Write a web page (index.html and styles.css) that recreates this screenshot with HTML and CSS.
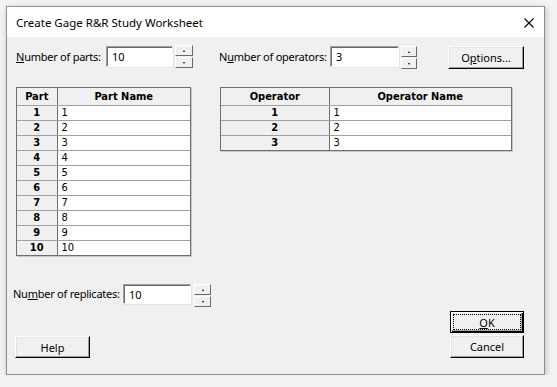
FILE: index.html
```html
<!DOCTYPE html>
<html lang="en">
<head>
    <meta charset="UTF-8">
    <title>Create Gage R&amp;R Study Worksheet</title>
    <link rel="stylesheet" href="styles.css">
</head>
<body>
    <div class="window">
        <!-- title bar -->
        <div class="titlebar">
            <span class="title">Create Gage R&amp;R Study Worksheet</span>
            <svg class="close" width="10" height="10" viewBox="0 0 10 10">
                <path d="M0.5 0.5 L9.5 9.5 M9.5 0.5 L0.5 9.5" stroke="#000" stroke-width="1.1" fill="none"/>
            </svg>
        </div>

        <div class="content">
            <!-- parts / operators / options -->
            <div class="top-row">
                <div class="field">
                    <label class="label label-parts"><u>N</u>umber of parts:</label>
                    <div class="input input-parts">10</div>
                    <div class="spin">
                        <span class="spin-btn"><i class="arrow-up"></i></span>
                        <span class="spin-btn"><i class="arrow-down"></i></span>
                    </div>
                </div>
                <div class="field field-ops">
                    <label class="label label-ops">N<u>u</u>mber of operators:</label>
                    <div class="input input-ops">3</div>
                    <div class="spin spin-ops">
                        <span class="spin-btn"><i class="arrow-up"></i></span>
                        <span class="spin-btn"><i class="arrow-down"></i></span>
                    </div>
                </div>
                <button class="btn btn-options">O<u>p</u>tions...</button>
            </div>

            <!-- grids -->
            <div class="tables">
                <div class="grid-box grid-parts">
                    <table class="grid">
                        <colgroup><col class="col-num-parts"><col></colgroup>
                        <tr><th>Part</th><th>Part Name</th></tr>
                        <tr><th>1</th><td>1</td></tr>
                        <tr><th>2</th><td>2</td></tr>
                        <tr><th>3</th><td>3</td></tr>
                        <tr><th>4</th><td>4</td></tr>
                        <tr><th>5</th><td>5</td></tr>
                        <tr><th>6</th><td>6</td></tr>
                        <tr><th>7</th><td>7</td></tr>
                        <tr><th>8</th><td>8</td></tr>
                        <tr><th>9</th><td>9</td></tr>
                        <tr><th>10</th><td>10</td></tr>
                    </table>
                </div>
                <div class="grid-box grid-ops">
                    <table class="grid">
                        <colgroup><col class="col-num-ops"><col></colgroup>
                        <tr><th>Operator</th><th>Operator Name</th></tr>
                        <tr><th>1</th><td>1</td></tr>
                        <tr><th>2</th><td>2</td></tr>
                        <tr><th>3</th><td>3</td></tr>
                    </table>
                </div>
            </div>

            <!-- replicates -->
            <div class="field field-reps">
                <label class="label label-reps">Nu<u>m</u>ber of replicates:</label>
                <div class="input input-reps">10</div>
                <div class="spin spin-reps">
                    <span class="spin-btn"><i class="arrow-up"></i></span>
                    <span class="spin-btn"><i class="arrow-down"></i></span>
                </div>
            </div>

            <!-- dialog buttons -->
            <div class="bottom">
                <button class="btn btn-help">Help</button>
                <div class="right-btns">
                    <button class="btn btn-ok"><span class="focus"><u>O</u>K</span></button>
                    <button class="btn btn-cancel">Cancel</button>
                </div>
            </div>
        </div>
    </div>
</body>
</html>
```

FILE: styles.css
```css
body {
    margin: 0;
    background-color: #f3f3f3;
    font-family: "Segoe UI", "Noto Sans", sans-serif;
    font-size: 11px;
    color: #000;
}
.window {
    width: 539px;
    height: 369px;
    box-sizing: border-box;
    margin: 6px 0 0 6px;
    border: 1px solid #8e8e8e;
    background-color: #f0f0f0;
    display: flex;
    flex-direction: column;
    box-shadow: 1px 2px 6px rgba(0, 0, 0, 0.22);
}
.titlebar {
    height: 30px;
    flex: none;
    background-color: #fff;
    display: flex;
    align-items: center;
    justify-content: space-between;
    padding: 0 10px 0 9px;
}
.title {
    font-size: 11.5px;
    margin-top: 1px;
}
.close {
    display: block;
    margin-top: 1px;
}
.content {
    flex: 1;
    display: flex;
    flex-direction: column;
    padding: 9px 20px 16px 9px;
}

/* fields */
.top-row {
    display: flex;
    align-items: flex-start;
}
.field {
    display: flex;
    align-items: flex-start;
}
.label {
    line-height: 21px;
    white-space: nowrap;
    letter-spacing: -0.25px;
}
.label-parts { width: 90px; }
.label-ops { width: 111px; }
.label-reps { width: 110px; }
.field-ops { margin-left: 26px; }
.input {
    box-sizing: border-box;
    height: 21px;
    background-color: #fff;
    border-top: 1px solid #a0a0a0;
    border-left: 1px solid #a0a0a0;
    border-right: 1px solid #fff;
    border-bottom: 1px solid #fff;
    box-shadow: inset 1px 1px 0 #696969, 1px 1px 0 #e3e3e3;
    padding: 2px 0 0 5px;
    line-height: 16px;
}
.input-parts { width: 67px; }
.input-ops { width: 69px; }
.input-reps { width: 68px; height: 20px; }
.spin {
    margin-left: 2px;
    width: 18px;
    display: flex;
    flex-direction: column;
    gap: 1px;
    margin-top: -1px;
}
.spin-ops { width: 16px; margin-top: 0; }
.spin-reps { width: 17px; margin-left: 3px; margin-top: 0; }
.spin-btn {
    box-sizing: border-box;
    height: 11px;
    background-color: #f0f0f0;
    border-top: 1px solid #fff;
    border-left: 1px solid #fff;
    border-right: 1px solid #696969;
    border-bottom: 1px solid #696969;
    display: flex;
    align-items: center;
    justify-content: center;
}
.arrow-up, .arrow-down {
    width: 0;
    height: 0;
    border-left: 1.5px solid transparent;
    border-right: 1.5px solid transparent;
}
.arrow-up { border-bottom: 2px solid #000; }
.arrow-down { border-top: 2px solid #000; }

/* buttons */
.btn {
    box-sizing: border-box;
    font-family: inherit;
    font-size: 11px;
    color: #000;
    background-color: #f0f0f0;
    border-top: 1px solid #fff;
    border-left: 1px solid #fff;
    border-right: 1px solid #000;
    border-bottom: 1px solid #000;
    box-shadow: inset -1px -1px 0 #a0a0a0, inset 1px 1px 0 #e3e3e3;
    padding: 0;
    height: 23px;
}
.btn-options {
    width: 76px;
    margin-left: auto;
}
.btn-help {
    width: 75px;
    height: 22px;
    margin-left: -1px;
}
.btn-ok, .btn-cancel {
    width: 74px;
}
.btn-ok {
    height: 22px;
    border: 1px solid #000;
    box-shadow: inset 1px 1px 0 #fff, inset -1px -1px 0 #000, inset -2px -2px 0 #a0a0a0;
    display: flex;
    align-items: center;
    justify-content: center;
}
.focus {
    display: flex;
    align-items: center;
    justify-content: center;
    width: 66px;
    height: 14px;
    border: 1px dotted #000;
}

/* grids */
.tables {
    display: flex;
    align-items: flex-start;
    margin-top: 18px;
}
.grid-box {
    border: 1px solid #6e6e6e;
    box-shadow: 1px 1px 0 #c8c8c8;
    background-color: #fff;
}
.grid-parts { width: 173px; }
.grid-ops { width: 290px; margin-left: 29px; }
.grid {
    width: 100%;
    border-collapse: collapse;
    border-style: hidden;
    table-layout: fixed;
    font-family: "DejaVu Sans Condensed", "DejaVu Sans", sans-serif;
    font-size: 11px;
}
.col-num-parts { width: 40px; }
.col-num-ops { width: 108px; }
.grid tr { height: 15px; }
.grid tr:first-child { height: 17px; }
.grid th, .grid td {
    border: 1px solid #a0a0a0;
    padding: 0 4px;
    line-height: 13px;
    white-space: nowrap;
}
.grid th {
    background-color: #f0f0f0;
    font-weight: bold;
    text-align: center;
}
.grid td {
    text-align: left;
}
.grid th:first-child {
    border-right-color: #6e6e6e;
}

/* replicates */
.field-reps {
    margin-top: 28px;
    margin-left: -3px;
}
.label-reps { line-height: 20px; }

/* bottom buttons */
.bottom {
    margin-top: auto;
    display: flex;
    align-items: flex-end;
    justify-content: space-between;
}
.right-btns {
    display: flex;
    flex-direction: column;
    gap: 2px;
}
```
